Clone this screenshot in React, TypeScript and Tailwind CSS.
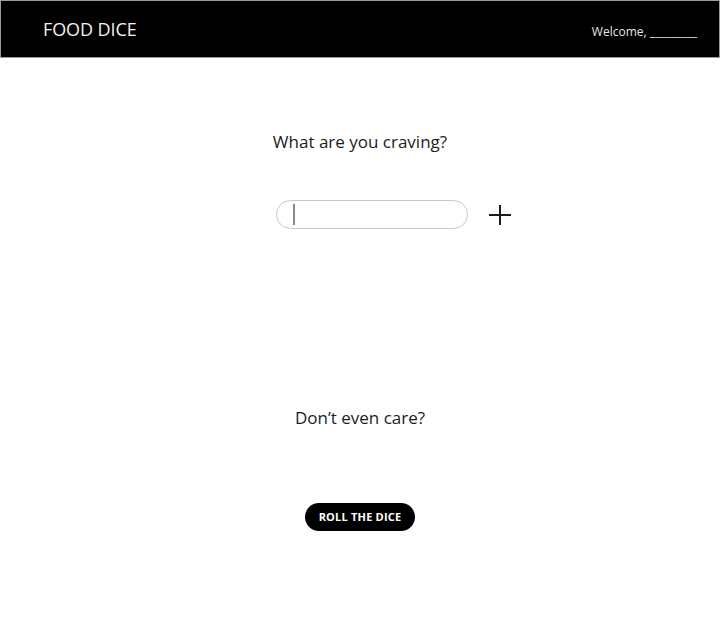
const App = () => {
    return (
        <div className="min-h-[630px] bg-white font-['Open_Sans',sans-serif] text-[#1c1c1c]">
            {/* Header */}
            <div className="h-[58px] flex flex-row items-center justify-between bg-black border border-[#9a9a9a] pl-[42px] pr-[22px]">
                <p className="text-[18px] text-[#f2f2f2] tracking-[-0.1px]">FOOD DICE</p>
                <p className="text-[12px] text-[#e6e6e6] pt-[6px]">Welcome, _________</p>
            </div>

            <div className="flex flex-col items-center">
                {/* Craving */}
                <p className="mt-[72px] text-[17px] leading-[24px]">What are you craving?</p>

                <div className="mt-[46px] flex flex-row items-center gap-[21px] pl-[66px]">
                    <div className="w-[192px] h-[29px] rounded-full border border-[#c8c8c8] flex items-center pl-[16px]">
                        <span className="block w-[2px] h-[21px] bg-[#8a8a8a]"></span>
                    </div>
                    <svg viewBox="0 0 22 22" className="w-[22px] h-[22px]" fill="none" stroke="#1c1c1c" strokeWidth={2}>
                        <path d="M11 1v20M0 11h22" />
                    </svg>
                </div>

                {/* Random */}
                <p className="mt-[177px] text-[17px] leading-[24px]">Don’t even care?</p>

                <button className="mt-[73px] w-[110px] h-[28px] rounded-full bg-black text-white text-[11px] font-bold tracking-[0.2px]">
                    ROLL THE DICE
                </button>
            </div>
        </div>
    );
}

export default App;
